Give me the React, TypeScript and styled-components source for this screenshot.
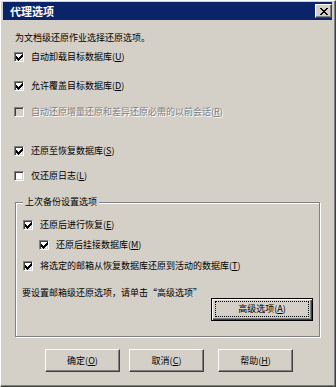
import React from "react";
import styled, { createGlobalStyle } from "styled-components";

const Global = createGlobalStyle`
  html, body { margin: 0; padding: 0; background: #d4d0c8; }
  * { box-sizing: border-box; }
`;

const FONT = `"Noto Sans CJK SC", "Liberation Sans", sans-serif`;

const Window = styled.div`
  width: 336px;
  height: 387px;
  background: #d4d0c8;
  border-top: 1px solid #fff;
  border-left: 1px solid #fff;
  border-right: 1px solid #404040;
  border-bottom: 1px solid #404040;
  box-shadow: inset -1px -1px 0 #808080;
  padding: 1px 3px 2px 2px;
  display: flex;
  flex-direction: column;
  font-family: ${FONT};
  font-size: 9px;
  color: #000;
`;

const TitleBar = styled.div`
  height: 18px;
  background: #0a246a;
  display: flex;
  align-items: center;
  justify-content: space-between;
  padding: 0 0 0 7px;
`;

const Title = styled.span`
  color: #fff;
  font-weight: bold;
  font-size: 11px;
  line-height: 14px;
`;

const CloseButton = styled.div`
  width: 17px;
  height: 14px;
  background: #d4d0c8;
  border-top: 1px solid #fff;
  border-left: 1px solid #fff;
  border-right: 1px solid #404040;
  border-bottom: 1px solid #404040;
  box-shadow: inset -1px -1px 0 #808080;
  display: flex;
  align-items: center;
  justify-content: center;
`;

const Body = styled.div`
  display: flex;
  flex-direction: column;
  padding-left: 11px;
`;

const Text = styled.div<{ $mt?: number; $ml?: number }>`
  height: 12px;
  line-height: 12px;
  margin-top: ${(p) => p.$mt ?? 0}px;
  margin-left: ${(p) => p.$ml ?? 0}px;
  white-space: nowrap;
`;

const Row = styled.div<{ $mt?: number; $indent?: number }>`
  display: flex;
  align-items: center;
  gap: 7px;
  height: 12px;
  margin-top: ${(p) => p.$mt ?? 0}px;
  margin-left: ${(p) => p.$indent ?? 0}px;
`;

const Box = styled.span<{ $disabled?: boolean }>`
  width: 10px;
  height: 10px;
  flex: none;
  border-top: 1px solid #808080;
  border-left: 1px solid #808080;
  border-right: 1px solid #fff;
  border-bottom: 1px solid #fff;
  box-shadow: inset 1px 1px 0 #404040, inset -1px -1px 0 #d4d0c8;
  background: ${(p) => (p.$disabled ? "#d4d0c8" : "#fff")};
  display: flex;
  align-items: center;
  justify-content: center;
`;

const Label = styled.span<{ $disabled?: boolean }>`
  line-height: 12px;
  white-space: nowrap;
  color: ${(p) => (p.$disabled ? "#808080" : "#000")};
  text-shadow: ${(p) => (p.$disabled ? "1px 1px 0 #fff" : "none")};
`;

const Group = styled.div`
  position: relative;
  margin: 20px 0 0 1px;
  width: 305px;
  border: 1px solid #808080;
  box-shadow: 1px 1px 0 #fff, inset 1px 1px 0 #fff;
  padding: 16px 6px 15px 6px;
  display: flex;
  flex-direction: column;
`;

const GroupLabel = styled.span`
  position: absolute;
  top: -7px;
  left: 7px;
  padding: 0 2px;
  background: #d4d0c8;
  line-height: 12px;
`;

const AdvRow = styled.div`
  display: flex;
  align-items: flex-start;
  justify-content: space-between;
  margin-top: 15px;
`;

const Button = styled.div<{ $w: number; $ml?: number; $mt?: number; $default?: boolean }>`
  width: ${(p) => p.$w}px;
  height: 23px;
  margin-left: ${(p) => p.$ml ?? 0}px;
  margin-top: ${(p) => p.$mt ?? 0}px;
  background: #d4d0c8;
  display: flex;
  align-items: stretch;
  justify-content: center;
  ${(p) =>
    p.$default
      ? `border: 1px solid #000;
         box-shadow: inset 1px 1px 0 #fff, inset -1px -1px 0 #404040, inset -2px -2px 0 #808080;`
      : `border-top: 1px solid #fff;
         border-left: 1px solid #fff;
         border-right: 1px solid #404040;
         border-bottom: 1px solid #404040;
         box-shadow: inset -1px -1px 0 #808080;`}
`;

const ButtonText = styled.span<{ $focus?: boolean }>`
  flex: 1;
  display: flex;
  align-items: center;
  justify-content: center;
  line-height: 12px;
  margin: ${(p) => (p.$focus ? "2px 3px 3px 3px" : "0")};
  border: ${(p) => (p.$focus ? "1px dotted #000" : "none")};
`;

const ButtonRow = styled.div`
  display: flex;
  margin-top: 12px;
  padding-left: 31px;
`;

const Check = () => (
  <svg width="7" height="7" viewBox="0 0 7 7" shapeRendering="crispEdges">
    <path d="M6 0h1v1h-1zM5 1h2v1h-2zM0 2h1v1h-1zM4 2h3v1h-3zM0 3h2v1h-2zM3 3h3v1h-3zM0 4h5v1h-5zM1 5h3v1h-3zM2 6h1v1h-1z" fill="#000" />
  </svg>
);

const CheckRow: React.FC<{
  checked?: boolean;
  disabled?: boolean;
  mt?: number;
  indent?: number;
  children: React.ReactNode;
}> = ({ checked, disabled, mt, indent, children }) => (
  <Row $mt={mt} $indent={indent}>
    <Box $disabled={disabled}>{checked && <Check />}</Box>
    <Label $disabled={disabled}>{children}</Label>
  </Row>
);

export default function App() {
  return (
    <>
      <Global />
      <Window>
        <TitleBar>
          <Title>代理选项</Title>
          <CloseButton>
            <svg width="8" height="7" viewBox="0 0 8 7" shapeRendering="crispEdges">
              <path
                d="M0 0h2v1h-2zM6 0h2v1h-2zM1 1h2v1h-2zM5 1h2v1h-2zM2 2h4v1h-4zM3 3h2v1h-2zM2 4h4v1h-4zM1 5h2v1h-2zM5 5h2v1h-2zM0 6h2v1h-2zM6 6h2v1h-2z"
                fill="#000"
              />
            </svg>
          </CloseButton>
        </TitleBar>
        <Body>
          <Text $mt={12} $ml={1}>为文档级还原作业选择还原选项。</Text>
          <CheckRow checked mt={7}>
            自动卸载目标数据库(<u>U</u>)
          </CheckRow>
          <CheckRow checked mt={17}>
            允许覆盖目标数据库(<u>D</u>)
          </CheckRow>
          <CheckRow disabled mt={14}>
            自动还原增量还原和差异还原必需的以前会话(<u>R</u>)
          </CheckRow>
          <CheckRow checked mt={27}>
            还原至恢复数据库(<u>S</u>)
          </CheckRow>
          <CheckRow mt={13}>
            仅还原日志(<u>L</u>)
          </CheckRow>
          <Group>
            <GroupLabel>上次备份设置选项</GroupLabel>
            <CheckRow checked indent={1}>
              还原后进行恢复(<u>E</u>)
            </CheckRow>
            <CheckRow checked mt={8} indent={17}>
              还原后挂接数据库(<u>M</u>)
            </CheckRow>
            <CheckRow checked mt={9} indent={1}>
              将选定的邮箱从恢复数据库还原到活动的数据库(<u>T</u>)
            </CheckRow>
            <AdvRow>
              <Text>要设置邮箱级还原选项，请单击“高级选项”</Text>
              <Button $w={102} $mt={11} $default>
                <ButtonText $focus>
                  高级选项(<u>A</u>)
                </ButtonText>
              </Button>
            </AdvRow>
          </Group>
          <ButtonRow>
            <Button $w={75}>
              <ButtonText>
                确定(<u>O</u>)
              </ButtonText>
            </Button>
            <Button $w={75} $ml={9}>
              <ButtonText>
                取消(<u>C</u>)
              </ButtonText>
            </Button>
            <Button $w={75} $ml={14}>
              <ButtonText>
                帮助(<u>H</u>)
              </ButtonText>
            </Button>
          </ButtonRow>
        </Body>
      </Window>
    </>
  );
}
